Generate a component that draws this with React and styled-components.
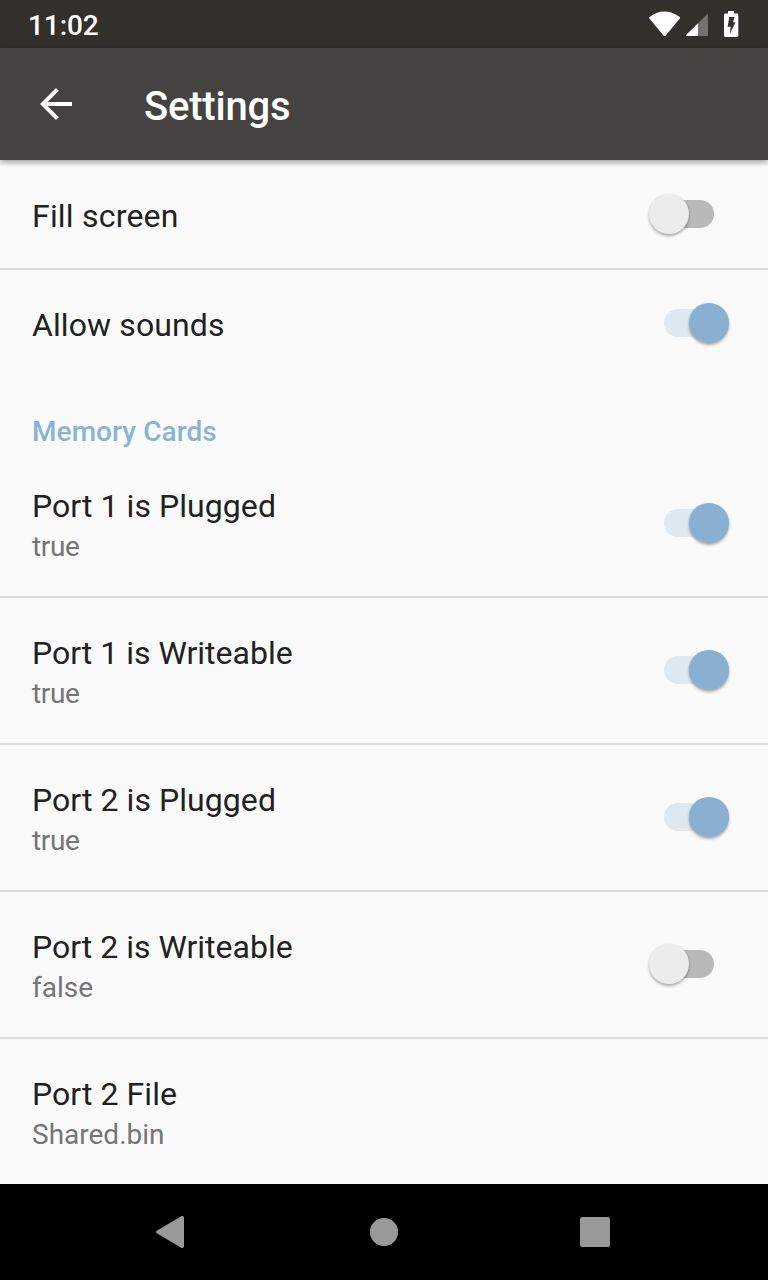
import React, { useState } from 'react';
import styled, { createGlobalStyle } from 'styled-components';

const GlobalStyle = createGlobalStyle`
  * { box-sizing: border-box; }
  body { margin: 0; background: #fafafa; }
`;

const Screen = styled.div`
  width: 768px;
  height: 1280px;
  display: flex;
  flex-direction: column;
  overflow: hidden;
  background: #fafafa;
  font-family: Roboto, 'Liberation Sans', sans-serif;
`;

const StatusBar = styled.header`
  flex: none;
  height: 48px;
  display: flex;
  justify-content: space-between;
  padding: 9px 29px 0 28px;
  background: #32302b;
  color: #fff;
`;

const Clock = styled.span`
  font-size: 28px;
  font-weight: 500;
  line-height: 33px;
  letter-spacing: -0.1px;
`;

const StatusIcons = styled.div`
  display: flex;
  align-items: flex-start;
  gap: 5px;
  padding-top: 2px;
  svg { display: block; }
  svg:last-child { margin-left: 11px; }
`;

const AppBar = styled.div`
  flex: none;
  height: 112px;
  display: flex;
  align-items: center;
  gap: 64px;
  padding: 0 32px;
  background: #444341;
  color: #fff;
  box-shadow: 0 2px 6px rgba(0, 0, 0, 0.4);
`;

const BackButton = styled.button`
  width: 48px;
  height: 48px;
  padding: 0;
  border: 0;
  background: none;
  color: inherit;
  svg { display: block; }
`;

const Heading = styled.h1`
  margin: 4px 0 0;
  font-size: 40px;
  font-weight: 500;
  line-height: 47px;
  letter-spacing: -0.2px;
`;

const List = styled.main`
  flex: 1;
  min-height: 0;
  overflow: hidden;
`;

const Row = styled.div`
  height: ${(p) => (p.$tall ? 147 : 109)}px;
  display: flex;
  align-items: center;
  justify-content: space-between;
  padding: 0 39px 0 32px;
  box-shadow: ${(p) => (p.$divided ? '0 1px 0 #dbdbdb, inset 0 -1px 0 #dbdbdb' : 'none')};
`;

const Labels = styled.div`
  align-self: flex-start;
  display: flex;
  flex-direction: column;
  gap: 5px;
  padding-top: 37px;
`;

const Title = styled.span`
  font-size: 32px;
  line-height: 38px;
  letter-spacing: ${(p) => p.$tracking || 0}px;
  color: #212121;
`;

const Summary = styled.span`
  font-size: 28px;
  line-height: 33px;
  letter-spacing: ${(p) => p.$tracking || 0}px;
  color: #757575;
`;

const Category = styled.h2`
  height: 72px;
  margin: 0;
  padding: 37px 32px 0;
  font-size: 28px;
  font-weight: 500;
  line-height: 33px;
  letter-spacing: 0.08px;
  color: #8ab4d6;
`;

const Track = styled.button`
  position: relative;
  width: 50px;
  height: 28px;
  margin: 0 15px 1px 0;
  padding: 0;
  border: 0;
  border-radius: 14px;
  background: ${(p) => (p.$on ? '#dde8f1' : '#b9b9b9')};
`;

const Thumb = styled.span`
  position: absolute;
  top: -6px;
  left: ${(p) => (p.$on ? 25 : -15)}px;
  width: 40px;
  height: 40px;
  border-radius: 50%;
  background: ${(p) => (p.$on ? '#8ab0d1' : '#ececec')};
  box-shadow: 0 2px 3px rgba(0, 0, 0, 0.3), 0 0 2px rgba(0, 0, 0, 0.08);
`;

const NavBar = styled.nav`
  flex: none;
  height: 96px;
  display: grid;
  grid-template-columns: 28px 28px 30px;
  justify-content: start;
  align-items: center;
  column-gap: 186px;
  padding-left: 156px;
  background: #000;
  svg { display: block; }
  svg:nth-child(3) { margin-left: -4px; }
`;

const SETTINGS = [
  { title: 'Fill screen', on: false, divided: true, tracking: 0.2 },
  { title: 'Allow sounds', on: true, tracking: 0.1 },
  { category: 'Memory Cards' },
  { title: 'Port 1 is Plugged', on: true, toggles: true, divided: true, tracking: 0.06 },
  { title: 'Port 1 is Writeable', on: true, toggles: true, divided: true },
  { title: 'Port 2 is Plugged', on: true, toggles: true, divided: true, tracking: 0.06 },
  { title: 'Port 2 is Writeable', on: false, toggles: true, divided: true },
  { title: 'Port 2 File', summary: 'Shared.bin', tracking: 0.06 },
];

function Setting({ title, summary, on: initial, toggles, divided, tracking }) {
  const [on, setOn] = useState(initial);
  const detail = toggles ? String(on) : summary;
  return (
    <Row $tall={Boolean(detail)} $divided={divided}>
      <Labels>
        <Title $tracking={tracking}>{title}</Title>
        {detail && <Summary $tracking={detail === 'true' ? -0.35 : 0}>{detail}</Summary>}
      </Labels>
      {initial !== undefined && (
        <Track role="switch" aria-checked={on} aria-label={title} $on={on} onClick={() => setOn(!on)}>
          <Thumb $on={on} />
        </Track>
      )}
    </Row>
  );
}

export default function App() {
  return (
    <Screen>
      <GlobalStyle />
      <StatusBar>
        <Clock>11:02</Clock>
        <StatusIcons>
          <svg width="32" height="26" viewBox="0 0 32 26" fill="#fff">
            <path d="M.6 5.9C4.800 2.400 10 .4 15.600.4S26.400 2.400 30.600 5.900c.6.5.7 1.100.2 1.700L16.700 24.400c-.6.7-1.600.7-2.200 0L.4 7.600C-.1 7 0 6.400.6 5.900z" />
          </svg>
          <svg width="22" height="26" viewBox="0 0 22 26">
            <path d="M12 12.600 20.600 3.400c.6-.6 1.400-.3 1.400.5V24c0 .6-.4 1-1 1h-9z" fill="#73726f" />
            <path d="M12 12.300V25H.8c-.8 0-1-.7-.5-1.200z" fill="#fff" />
          </svg>
          <svg width="15" height="26" viewBox="0 0 15 26">
            <path d="M4 0h6v2.500h3c.8 0 1.300.5 1.300 1.300v21c0 .7-.5 1.200-1.300 1.200H1.300C.5 26 0 25.500 0 24.800v-21c0-.8.500-1.300 1.300-1.300H4z" fill="#fff" />
            <path d="M5.300 6h5.200L9 11.300h2.500L5.700 23.300l1-7.600H3.600z" fill="#32302b" />
          </svg>
        </StatusIcons>
      </StatusBar>
      <AppBar>
        <BackButton aria-label="Back">
          <svg width="48" height="48" viewBox="0 0 24 24" fill="#fff">
            <path d="M20 11H7.830l5.590-5.590L12 4l-8 8 8 8 1.410-1.410L7.830 13H20v-2z" />
          </svg>
        </BackButton>
        <Heading>Settings</Heading>
      </AppBar>
      <List>
        {SETTINGS.map((s) =>
          s.category ? <Category key={s.category}>{s.category}</Category> : <Setting key={s.title} {...s} />
        )}
      </List>
      <NavBar>
        <svg width="28" height="32" viewBox="0 0 28 32" fill="#999">
          <path d="M.7 14.800 25.200.2C26.500-.4 28 .3 28 1.800v28.400c0 1.500-1.500 2.200-2.800 1.600L.7 17.200c-.9-.5-.9-1.900 0-2.400z" />
        </svg>
        <svg width="28" height="28" viewBox="0 0 28 28" fill="#999">
          <circle cx="14" cy="14" r="14" />
        </svg>
        <svg width="30" height="30" viewBox="0 0 30 30" fill="#999">
          <rect width="30" height="30" rx="2.500" />
        </svg>
      </NavBar>
    </Screen>
  );
}
